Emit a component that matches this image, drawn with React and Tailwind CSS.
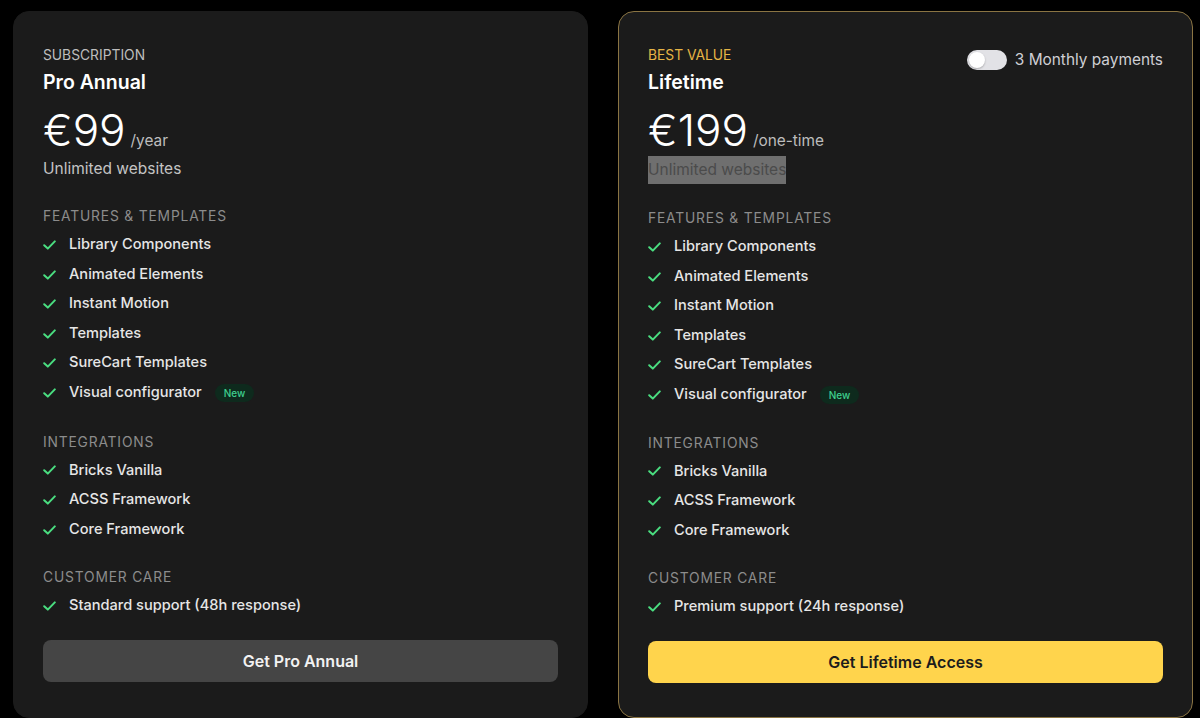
import React from "react";

function Check() {
  return (
    <svg width="13" height="10" viewBox="0 0 13 10" fill="none" className="shrink-0">
      <path d="M1.2 5.2 L4.8 8.6 L11.8 1.4" stroke="#4ade80" strokeWidth="2" strokeLinecap="round" strokeLinejoin="round" />
    </svg>
  );
}

function Item({ children, badge }) {
  return (
    <li className="flex h-[29.6px] items-center gap-[13px]">
      <Check />
      <span className="text-[14.6px] font-medium text-[#e6e6e6]">{children}</span>
      {badge && (
        <span className="rounded-full bg-[#0e2a1d] px-[9px] py-[3px] text-[10px] font-medium leading-[12px] text-[#3ecf8e]">
          New
        </span>
      )}
    </li>
  );
}

function Section({ title, items, mt }) {
  return (
    <div className={mt}>
      <div className="text-[13.8px] leading-5 tracking-[0.06em] text-[#8c8c8c]">{title}</div>
      <ul className="mt-[4px]">
        {items.map((it) => (
          <Item key={it.t} badge={it.b}>
            {it.t}
          </Item>
        ))}
      </ul>
    </div>
  );
}

const features = [
  { t: "Library Components" },
  { t: "Animated Elements" },
  { t: "Instant Motion" },
  { t: "Templates" },
  { t: "SureCart Templates" },
  { t: "Visual configurator", b: true },
];
const integrations = [{ t: "Bricks Vanilla" }, { t: "ACSS Framework" }, { t: "Core Framework" }];

function Card({ gold }) {
  return (
    <div
      className={
        "flex w-[575px] flex-col rounded-[16px] border bg-[#1b1b1b] px-[29px] pt-[31px] pb-[30px] " +
        (gold ? "border-[#8a7443]" : "border-[#1b1b1b]")
      }
    >
      <div className="flex items-start justify-between">
        <div>
          <div className={"text-[13.8px] leading-6 " + (gold ? "text-[#e6b445]" : "text-[#bdbdbd]")}>
            {gold ? "BEST VALUE" : "SUBSCRIPTION"}
          </div>
          <div className="mt-px text-[19.5px] font-semibold leading-7 text-white">{gold ? "Lifetime" : "Pro Annual"}</div>
        </div>
        {gold && (
          <div className="mt-[5px] flex items-center gap-[8px]">
            <div className="flex h-[20px] w-[40px] items-center rounded-full bg-[#e2e2e6] px-[2px]">
              <div className="h-[16px] w-[16px] rounded-full bg-white shadow-[0_1px_2px_rgba(0,0,0,0.25)]" />
            </div>
            <span className="text-[15.4px] leading-6 text-[#cfcfd4]">3 Monthly payments</span>
          </div>
        )}
      </div>
      <div className="mt-[12px] flex items-baseline gap-[5px]">
        <span className="text-[44px] font-light leading-[44px] text-white">{gold ? "€199" : "€99"}</span>
        <span className="text-[15.4px] text-[#bdbdbd]">{gold ? "/one-time" : "/year"}</span>
      </div>
      {gold ? (
        <div className="mt-[4px] flex text-[15.5px] leading-[28px]">
          <span className="bg-[#6f6f6f] text-[#4b4b4b]">Unlimited websites</span>
        </div>
      ) : (
        <div className="mt-[5px] text-[15.5px] leading-6 text-[#c4c4c4]">Unlimited websites</div>
      )}
      <Section mt={gold ? "mt-[24px]" : "mt-[25px]"} title="FEATURES & TEMPLATES" items={features} />
      <Section mt={gold ? "mt-[23px]" : "mt-[24px]"} title="INTEGRATIONS" items={integrations} />
      <Section
        mt="mt-[23px]"
        title="CUSTOMER CARE"
        items={[{ t: gold ? "Premium support (24h response)" : "Standard support (48h response)" }]}
      />
      <button
        className={
          "mt-[19px] h-[42px] w-full rounded-[8px] text-[16px] font-semibold " +
          (gold ? "bg-[#ffd44c] text-[#1c1c1c]" : "bg-[#454545] text-[#f2f2f2]")
        }
      >
        {gold ? "Get Lifetime Access" : "Get Pro Annual"}
      </button>
    </div>
  );
}

export default function App() {
  return (
    <div
      className="flex h-[718px] w-[1200px] gap-[30px] overflow-hidden bg-black pl-[13px] pt-[11px]"
      style={{ fontFamily: "Inter, 'Noto Sans', sans-serif" }}
    >
      <Card />
      <Card gold />
    </div>
  );
}
